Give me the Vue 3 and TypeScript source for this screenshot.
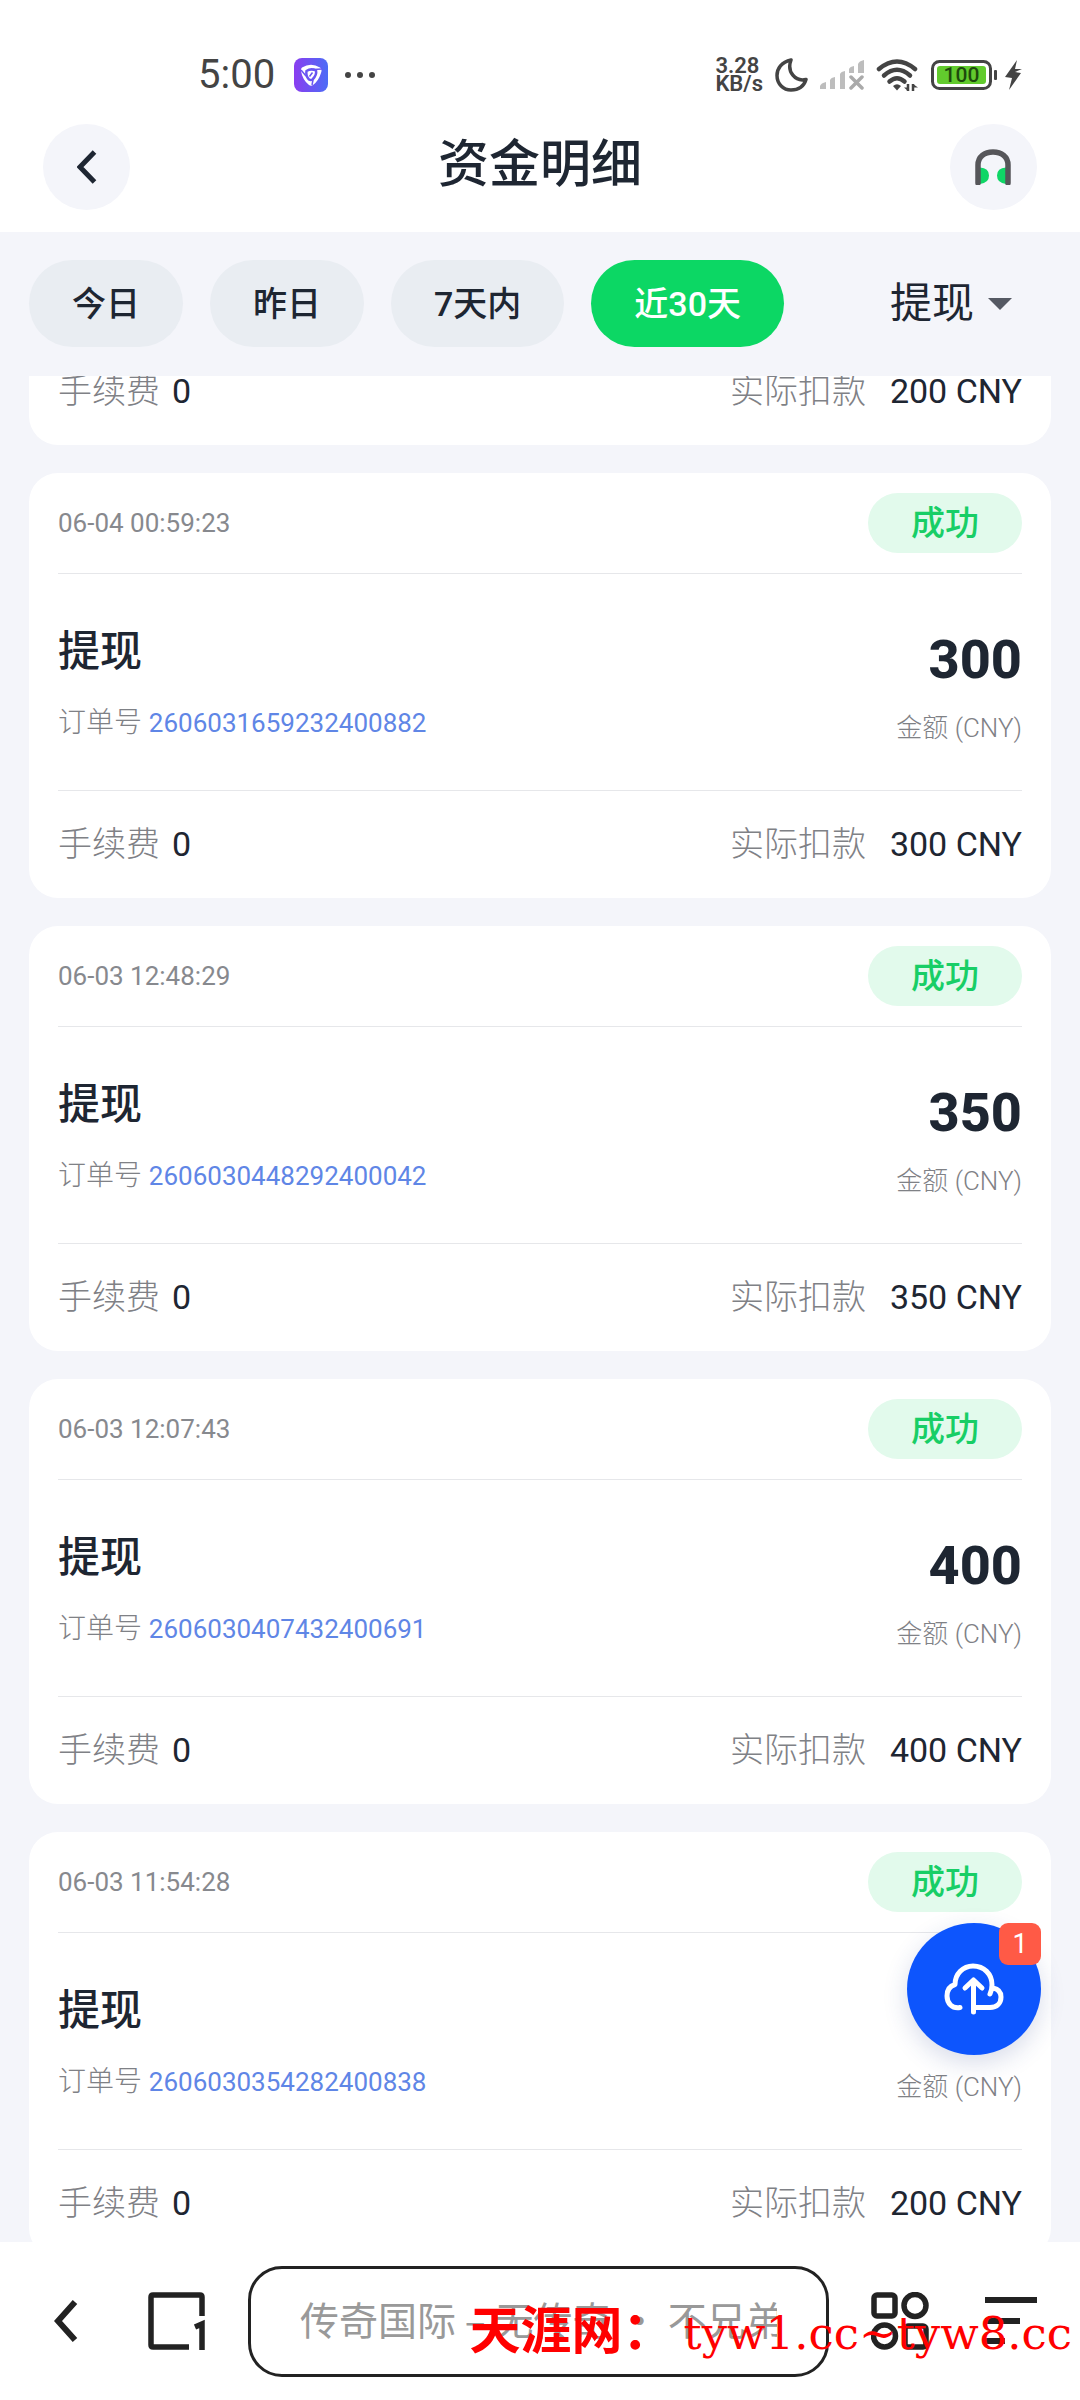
<script setup lang="ts">
import { ref } from 'vue'

interface FundRecord {
  time: string
  orderNo: string
  amount: number
}

const ranges = ['今日', '昨日', '7天内', '近30天']
const activeRange = ref('近30天')
const recordType = ref('提现')
const address = ref('传奇国际 – 无传奇 • 不兄弟')

const records: FundRecord[] = [
  { time: '06-04 00:59:23', orderNo: '2606031659232400882', amount: 300 },
  { time: '06-03 12:48:29', orderNo: '2606030448292400042', amount: 350 },
  { time: '06-03 12:07:43', orderNo: '2606030407432400691', amount: 400 },
  { time: '06-03 11:54:28', orderNo: '2606030354282400838', amount: 200 },
]
</script>

<template>
  <div class="screen">
    <div class="status">
      <div class="status-side">
        <span class="clock">5:00</span>
        <svg class="app-badge" width="34" height="34" viewBox="0 0 34 34" aria-hidden="true">
          <defs>
            <linearGradient id="badgeFill" x1="0" y1="0" x2="1" y2="0">
              <stop offset="0" stop-color="#8a3df0" />
              <stop offset="1" stop-color="#4c6cf6" />
            </linearGradient>
          </defs>
          <rect width="34" height="34" rx="8" fill="url(#badgeFill)" />
          <path d="M8 9.500Q17 4 26 9.500Q28.500 11 27 15Q24.500 23 19 27Q17 28.300 15 27Q8.500 22 7 13Q6.500 10.500 8 9.500Z" fill="#fff" />
          <path d="M12.500 13Q17 10 22 12.500Q23 17 18.500 21.500Q17 22.500 15 21.500Q11.500 18 12.500 13Z" fill="none" stroke="#6a55f2" stroke-width="2.500" />
          <path d="M18.500 14.500L15.500 18.500M19 11.500L28 11M19 22L18 27M12 18L7 12" stroke="#6a55f2" stroke-width="1.500" />
        </svg>
        <svg width="30" height="6" viewBox="0 0 30 6" aria-hidden="true">
          <g fill="#444"><circle cx="3" cy="3" r="3" /><circle cx="15" cy="3" r="3" /><circle cx="27" cy="3" r="3" /></g>
        </svg>
      </div>
      <div class="status-side status-right">
        <div class="speed"><span>3.28</span><span>KB/s</span></div>
        <svg width="33" height="34" viewBox="0 0 33 34" aria-hidden="true">
          <path d="M16 2C6.500 4 2 10.500 2 17.500C2 26 8.500 32 16 32C23.500 32 29 28 31 21.500C20.500 24 11.500 14 16 2Z" fill="none" stroke="#444" stroke-width="3.500" stroke-linejoin="round" />
        </svg>
        <svg class="signal" width="44" height="30" viewBox="0 0 44 30" aria-hidden="true">
          <g fill="#bdbdbd">
            <path d="M0 29V26Q1 23 6 22V29Z" />
            <path d="M10 29V20Q11 17.500 15 17V29Z" />
            <path d="M20 29V14Q21 11.500 25 11V29Z" />
            <path d="M29 13V9Q30 6.500 34 6V13Z" />
            <path d="M38 13V4Q39 1 44 0V13Z" />
          </g>
          <path d="M31 17L42 28M42 17L31 28" stroke="#aaa" stroke-width="3.500" stroke-linecap="round" />
        </svg>
        <svg width="43" height="34" viewBox="0 0 43 34" aria-hidden="true">
          <g fill="none" stroke="#444" stroke-width="4.500" stroke-linecap="round">
            <path d="M3 11Q21 -4 39 11" />
            <path d="M8 17.500Q21 6 34 17.500" />
            <path d="M13.500 23.500Q21 17 28.500 23.500" />
          </g>
          <path d="M17 28Q21 24.500 25 28L21 32.500Z" fill="#444" />
          <path d="M32 26V33M37 26V33" stroke="#444" stroke-width="2.500" />
          <path d="M32 33L28 29.500H32ZM37 26L42 29.500H37Z" fill="#444" />
        </svg>
        <div class="battery">
          <svg width="66" height="30" viewBox="0 0 66 30" aria-hidden="true">
            <rect x="1.500" y="1.500" width="58" height="27" rx="7" fill="none" stroke="#444" stroke-width="3" />
            <rect x="6" y="6" width="49" height="18" rx="3" fill="#62cb2d" />
            <rect x="63" y="10" width="3" height="10" rx="1" fill="#444" />
          </svg>
          <span class="level">100</span>
        </div>
        <svg class="bolt" width="17" height="30" viewBox="0 0 17 30" aria-hidden="true">
          <path d="M12 0L0 17L7 18L4 30L16 13L10 12L17 9L10 9Z" fill="#444" />
        </svg>
      </div>
    </div>

    <header class="header">
      <button class="round" type="button" aria-label="返回">
        <svg width="20" height="34" viewBox="0 0 20 34" aria-hidden="true">
          <path d="M17.500 2L3 17L17.500 32" fill="none" stroke="#1e2632" stroke-width="5" />
        </svg>
      </button>
      <h1>资金明细</h1>
      <button class="round" type="button" aria-label="客服">
        <svg width="36" height="36" viewBox="0 0 36 36" aria-hidden="true">
          <path d="M5 18.500Q14 19 14 26.500Q14 34 5 35ZM31 18.500Q22 19 22 26.500Q22 34 31 35Z" fill="#0fd666" />
          <path d="M3 34V16C3 7.500 9.500 3 18 3S33 7.500 33 16V34" fill="none" stroke="#56565a" stroke-width="5.500" stroke-linecap="round" />
        </svg>
      </button>
    </header>

    <nav class="filters">
      <button
        v-for="range in ranges"
        :key="range"
        type="button"
        class="chip"
        :class="{ active: range === activeRange }"
        @click="activeRange = range"
      >{{ range }}</button>
      <label class="type">
        <select v-model="recordType" aria-label="类型">
          <option>提现</option>
        </select>
        <svg width="24" height="12" viewBox="0 0 24 12" aria-hidden="true"><path d="M0 0H24L12 12Z" fill="#555963" /></svg>
      </label>
    </nav>

    <main class="list">
      <article class="card card-cut">
        <div class="foot">
          <span class="pair fee"><span class="label">手续费</span><span>0</span></span>
          <span class="pair"><span class="label">实际扣款</span><span>200 CNY</span></span>
        </div>
      </article>
      <article v-for="record in records" :key="record.orderNo" class="card">
        <div class="head">
          <time>{{ record.time }}</time>
          <span class="state">成功</span>
        </div>
        <div class="body">
          <div>
            <h2>提现</h2>
            <p class="order">订单号 <a href="#">{{ record.orderNo }}</a></p>
          </div>
          <div class="sum">
            <strong>{{ record.amount }}</strong>
            <p class="unit">金额 (CNY)</p>
          </div>
        </div>
        <div class="foot">
          <span class="pair fee"><span class="label">手续费</span><span>0</span></span>
          <span class="pair"><span class="label">实际扣款</span><span>{{ record.amount }} CNY</span></span>
        </div>
      </article>
    </main>

    <button class="upload" type="button" aria-label="上传">
      <svg width="60" height="52" viewBox="0 0 60 52" aria-hidden="true">
        <g fill="none" stroke="#fff" stroke-width="5" stroke-linecap="round" stroke-linejoin="round">
          <path d="M16 44.500C8 46 3 40 3 33C3 27 6 23 11 21.500C11 11 19 3 29 3C40 3 48 11 48 22C48 26 47 29 46 31M49 25C54 26 57 29 57 34C57 40 53 44.500 46 44.500H30" />
          <path d="M29.500 49V18M21 25L29.500 17L38 25" />
        </g>
      </svg>
      <span class="count">1</span>
    </button>

    <footer class="toolbar">
      <button class="tool" type="button" aria-label="后退">
        <svg width="24" height="42" viewBox="0 0 24 42" aria-hidden="true"><path d="M21 2L4 21L21 40" fill="none" stroke="#222" stroke-width="6" /></svg>
      </button>
      <button class="tool tabs" type="button" aria-label="标签页">
        <svg width="58" height="58" viewBox="0 0 58 58" aria-hidden="true">
          <path d="M41 55H5Q3 55 3 53V5Q3 3 5 3H52Q54 3 54 5V24" fill="none" stroke="#222" stroke-width="5.500" />
          <path d="M47 35L54 32V58" fill="none" stroke="#222" stroke-width="5.500" />
        </svg>
      </button>
      <input v-model="address" class="address" type="text" aria-label="地址栏" />
      <button class="tool apps" type="button" aria-label="应用">
        <svg width="58" height="58" viewBox="0 0 58 58" aria-hidden="true">
          <g fill="none" stroke="#222" stroke-width="5.500">
            <rect x="3" y="3" width="21" height="21" rx="3" />
            <circle cx="44" cy="13.500" r="11" />
            <circle cx="13.500" cy="44" r="11" />
            <rect x="34" y="34" width="21" height="21" rx="3" />
          </g>
        </svg>
      </button>
      <button class="tool" type="button" aria-label="菜单">
        <svg width="52" height="48" viewBox="0 0 52 48" aria-hidden="true"><path d="M0 3H52M0 24H35M0 44H20" stroke="#222" stroke-width="6" /></svg>
      </button>
      <p class="mark"><b>天涯网：</b><span>tyw1.cc~tyw8.cc</span></p>
    </footer>
  </div>
</template>

<style>
body {
  background: #f4f5fa;
}
</style>

<style scoped>
* {
  box-sizing: border-box;
}
.screen {
  position: relative;
  display: flex;
  flex-direction: column;
  height: 100vh;
  overflow: hidden;
  background: #f4f5fa;
  color: #1e2632;
  font-family: Roboto, "Noto Sans CJK SC", sans-serif;
}
h1, h2, p {
  margin: 0;
}
button {
  padding: 0;
  border: 0;
  background: none;
  color: inherit;
  font-family: inherit;
  cursor: pointer;
}
svg {
  display: block;
  flex: none;
}
.status {
  display: flex;
  justify-content: space-between;
  align-items: center;
  flex: none;
  height: 110px;
  padding: 40px 58px 0 198px;
  background: #fff;
  color: #444;
}
.status-side {
  display: flex;
  align-items: center;
}
.clock {
  margin-right: 19px;
  font-size: 40px;
  line-height: 44px;
}
.app-badge {
  margin-right: 17px;
}
.status-right {
  gap: 12px;
}
.bolt {
  margin-left: -4px;
}
.speed {
  display: flex;
  flex-direction: column;
  font-size: 22px;
  font-weight: 600;
  line-height: 18px;
}
.battery {
  position: relative;
}
.level {
  position: absolute;
  top: 0;
  left: 0;
  width: 61px;
  color: #1d4a0c;
  font-size: 21px;
  font-weight: 500;
  line-height: 30px;
  text-align: center;
}
.header {
  display: flex;
  justify-content: space-between;
  align-items: center;
  flex: none;
  padding: 14px 43px 22px;
  background: #fff;
}
.header h1 {
  padding-bottom: 4px;
  font-size: 51px;
  font-weight: 500;
  line-height: 64px;
}
.round {
  display: flex;
  align-items: center;
  justify-content: center;
  width: 87px;
  height: 86px;
  border-radius: 50%;
  background: #f4f5fa;
}
.filters {
  display: flex;
  align-items: center;
  flex: none;
  gap: 27px;
  padding: 28px 68px 29px 29px;
}
.chip {
  height: 87px;
  padding: 0 43px 5px;
  border-radius: 44px;
  background: #e9edf2;
  font-size: 34px;
  font-weight: 500;
  white-space: nowrap;
}
.chip.active {
  background: #0cd764;
  color: #fff;
}
.type {
  display: flex;
  align-items: center;
  gap: 13px;
  margin-left: auto;
}
.type select {
  appearance: none;
  padding: 0;
  border: 0;
  background: none;
  color: inherit;
  font-family: inherit;
  font-size: 42px;
  line-height: 60px;
}
.list {
  display: flex;
  flex: 1;
  flex-direction: column;
  gap: 28px;
  min-height: 0;
  overflow: hidden;
  padding: 0 29px;
}
.card {
  flex: none;
  padding: 0 29px;
  border-radius: 29px;
  background: #fff;
}
.card-cut {
  margin-top: -38px;
}
.head {
  display: flex;
  align-items: center;
  justify-content: space-between;
  height: 101px;
  border-bottom: 1px solid #e6e7ea;
}
.head time {
  color: #87898e;
  font-size: 26px;
}
.state {
  padding: 0 43px;
  border-radius: 30px;
  background: #e2faec;
  color: #18ce66;
  font-size: 34px;
  font-weight: 500;
  line-height: 60px;
}
.body {
  display: flex;
  justify-content: space-between;
  height: 217px;
  padding-top: 48px;
  border-bottom: 1px solid #e6e7ea;
}
.body h2 {
  font-size: 42px;
  font-weight: 500;
  line-height: 60px;
}
.order {
  margin-top: 21px;
  color: #7f8186;
  font-size: 28px;
  font-weight: 300;
  line-height: 40px;
}
.order a {
  color: #5f86e6;
  font-size: 26px;
  font-weight: 400;
  text-decoration: none;
}
.sum {
  padding-top: 8px;
  text-align: right;
}
.sum strong {
  display: block;
  font-size: 54px;
  font-weight: 800;
  line-height: 60px;
}
.unit {
  margin-top: 18px;
  color: #7f8186;
  font-size: 26px;
  font-weight: 300;
  line-height: 40px;
}
.foot {
  display: flex;
  align-items: center;
  justify-content: space-between;
  height: 107px;
  padding-bottom: 6px;
  font-size: 34px;
}
.pair {
  display: flex;
  align-items: baseline;
  gap: 24px;
}
.pair.fee {
  gap: 12px;
}
.label {
  color: #7f8186;
  font-weight: 300;
}
.upload {
  position: absolute;
  right: 39px;
  bottom: 345px;
  display: flex;
  align-items: center;
  justify-content: center;
  width: 134px;
  height: 132px;
  border-radius: 50%;
  background: #0d55fd;
  box-shadow: 0 8px 24px rgba(40, 60, 140, 0.18);
}
.count {
  position: absolute;
  top: 0;
  right: 0;
  width: 42px;
  border-radius: 9px;
  background: #ff5a46;
  color: #fff;
  font-size: 27px;
  line-height: 42px;
}
.toolbar {
  position: relative;
  display: flex;
  align-items: center;
  flex: none;
  height: 158px;
  padding: 0 43px 0 54px;
  background: #fff;
}
.tool {
  flex: none;
}
.tabs {
  margin: 0 42px 0 70px;
}
.address {
  flex: 1;
  min-width: 0;
  height: 111px;
  padding: 0 49px 6px;
  border: 3px solid #222;
  border-radius: 34px;
  background: #fff;
  color: #999;
  font-family: "Noto Sans CJK SC", sans-serif;
  font-size: 39px;
}
.apps {
  margin: 0 56px 0 42px;
}
.mark {
  position: absolute;
  right: 8px;
  bottom: 36px;
  display: flex;
  align-items: baseline;
  color: #f00;
  line-height: 60px;
  white-space: nowrap;
  pointer-events: none;
}
.mark b {
  margin-right: 10px;
  font-size: 51px;
  font-weight: 700;
}
.mark span {
  font-family: "DejaVu Serif", serif;
  font-size: 45px;
}
</style>
